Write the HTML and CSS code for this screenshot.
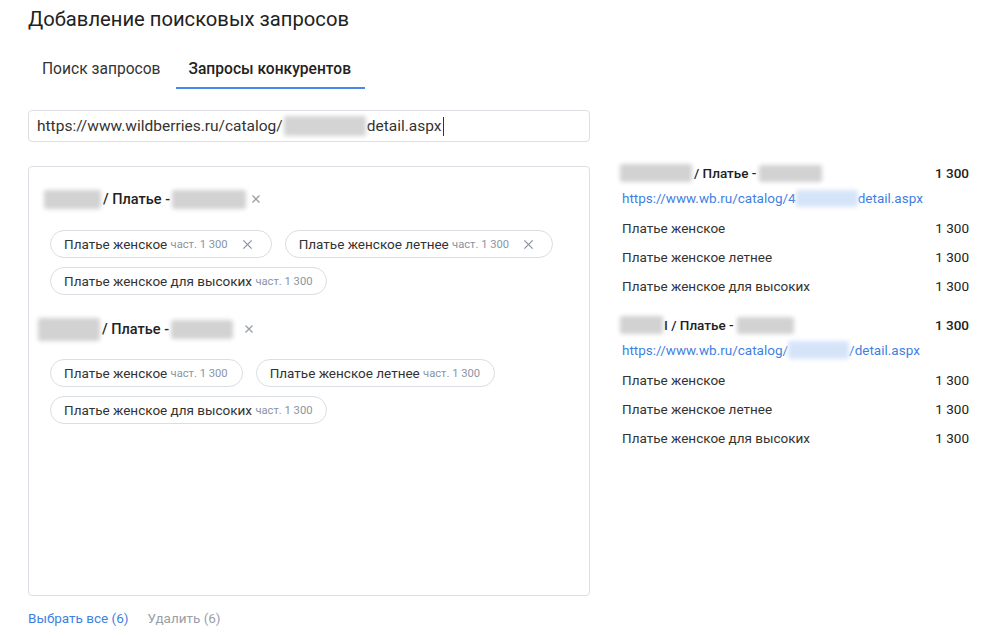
FILE: index.html
```html
<!DOCTYPE html>
<html lang="ru">
<head>
<meta charset="utf-8">
<link rel="stylesheet" href="styles.css">
</head>
<body>
<div class="page">
  <h1 class="title">Добавление поисковых запросов</h1>
  <div class="tabs">
    <div class="tab">Поиск запросов</div>
    <div class="tab active">Запросы конкурентов</div>
  </div>
  <div class="url-input">
    <span>https://www.wildberries.ru/catalog/</span><span class="blur b-input"></span><span>detail.aspx</span><span class="caret"></span>
  </div>
  <div class="main">
    <div class="left">
      <div class="panel">
        <div class="group">
          <div class="group-head">
            <span class="blur b-g1a"></span><span class="gname">/ Платье -</span><span class="blur b-g1b"></span>
            <svg class="x-small" viewBox="0 0 10 10"><path d="M1.5 1.5l7 7M8.5 1.5l-7 7"/></svg>
          </div>
          <div class="chips">
            <div class="chip">Платье женское <span class="freq">част. 1 300</span><svg class="x-chip" viewBox="0 0 12 12"><path d="M1.5 1.5l9 9M10.5 1.5l-9 9"/></svg></div>
            <div class="chip">Платье женское летнее <span class="freq">част. 1 300</span><svg class="x-chip" viewBox="0 0 12 12"><path d="M1.5 1.5l9 9M10.5 1.5l-9 9"/></svg></div>
            <div class="chip">Платье женское для высоких <span class="freq">част. 1 300</span></div>
          </div>
        </div>
        <div class="group">
          <div class="group-head g2">
            <span class="blur b-g2a"></span><span class="gname">/ Платье -</span><span class="blur b-g2b"></span>
            <svg class="x-small" viewBox="0 0 10 10"><path d="M1.5 1.5l7 7M8.5 1.5l-7 7"/></svg>
          </div>
          <div class="chips">
            <div class="chip">Платье женское <span class="freq">част. 1 300</span></div>
            <div class="chip">Платье женское летнее <span class="freq">част. 1 300</span></div>
            <div class="chip">Платье женское для высоких <span class="freq">част. 1 300</span></div>
          </div>
        </div>
      </div>
      <div class="actions">
        <span class="act primary">Выбрать все (6)</span>
        <span class="act muted">Удалить (6)</span>
      </div>
    </div>
    <div class="right">
      <div class="rgroup">
        <div class="rrow rhead"><span class="rname"><span class="blur b-r1a"></span>/ Платье -<span class="blur b-r1b"></span></span><span class="num">1 300</span></div>
        <div class="rlink">https://www.wb.ru/catalog/4<span class="blur blue b-r1c"></span>detail.aspx</div>
        <div class="rrow"><span>Платье женское</span><span class="num">1 300</span></div>
        <div class="rrow"><span>Платье женское летнее</span><span class="num">1 300</span></div>
        <div class="rrow"><span>Платье женское для высоких</span><span class="num">1 300</span></div>
      </div>
      <div class="rgroup">
        <div class="rrow rhead"><span class="rname"><span class="blur b-r2a"></span>I / Платье -<span class="blur b-r2b"></span></span><span class="num">1 300</span></div>
        <div class="rlink">https://www.wb.ru/catalog/<span class="blur blue b-r2c"></span>/detail.aspx</div>
        <div class="rrow"><span>Платье женское</span><span class="num">1 300</span></div>
        <div class="rrow"><span>Платье женское летнее</span><span class="num">1 300</span></div>
        <div class="rrow"><span>Платье женское для высоких</span><span class="num">1 300</span></div>
      </div>
    </div>
  </div>
</div>
</body>
</html>
```

FILE: styles.css
```css
* { box-sizing: border-box; }
html, body { margin: 0; padding: 0; background: #fff; }
body { font-family: Roboto, "Liberation Sans", Arial, sans-serif; color: #2b2b2b; }
.page { padding: 7px 0 0 28px; width: 1000px; height: 638px; overflow: hidden; }
.title { margin: 0; font-size: 20.2px; font-weight: 400; line-height: 24px; color: #222; }
.tabs { display: flex; margin-top: 28px; }
.tab { padding: 0 14px 8px 14px; font-size: 15.6px; line-height: 20px; color: #333; border-bottom: 2px solid transparent; }
.tab + .tab { margin-left: 1px; padding-left: 13px; }
.tab.active { font-weight: 500; color: #222; border-bottom-color: #4a88ea; }
.url-input { margin-top: 21px; width: 562px; height: 32px; border: 1px solid #dcdfe3; border-radius: 4px; padding: 0 8px; display: flex; align-items: center; font-size: 15.5px; color: #333; }
.caret { display: inline-block; width: 1px; height: 19px; background: #333; margin-left: 1px; }
.blur { display: inline-block; background: #d2d2d2; filter: blur(2px); vertical-align: middle; border-radius: 2px; }
.blur.blue { background: #d6e4fa; }
.b-input { width: 82px; height: 20px; background: #d4d4d4; margin: 0 1px; }
.main { display: flex; margin-top: 24px; }
.left { width: 562px; }
.panel { height: 430px; border: 1px solid #dcdfe3; border-radius: 4px; padding: 21px 0 0 0; }
.group-head { display: flex; align-items: center; height: 22px; padding-left: 15px; font-size: 14.5px; font-weight: 500; color: #222; }
.group-head.g2 { padding-left: 9px; }
.gname { margin: 0 2px; }
.b-g1a { width: 57px; height: 19px; }
.b-g1b { width: 74px; height: 19px; }
.b-g2a { width: 62px; height: 23px; }
.b-g2b { width: 62px; height: 19px; }
.x-small { width: 10px; height: 10px; margin-left: 5px; stroke: #9aa0a8; stroke-width: 1.4; fill: none; }
.group-head.g2 .x-small { margin-left: 11px; }
.chips { display: flex; flex-wrap: wrap; gap: 9px 13px; padding: 20px 0 0 21px; width: 540px; }
.group + .group { margin-top: 23px; }
.group + .group .chips { padding-top: 19px; }
.chip { display: flex; align-items: center; height: 28px; border: 1px solid #dadde2; border-radius: 14px; padding: 0 14px 0 13px; font-size: 13.5px; color: #333; white-space: pre; }
.freq { font-size: 11.2px; color: #8a94a3; }
.x-chip { width: 11px; height: 11px; margin-left: 14px; margin-right: 4px; stroke: #8a94a3; stroke-width: 1.4; fill: none; }
.actions { display: flex; gap: 19px; margin-top: 14px; font-size: 13.5px; }
.act.primary { color: #3f7fe3; }
.act.muted { color: #9aa0a8; }
.right { width: 347px; margin-left: 32px; margin-top: -1px; }
.rgroup + .rgroup { margin-top: 17px; }
.rrow { display: flex; justify-content: space-between; align-items: center; height: 29px; font-size: 13.5px; color: #333; }
.rhead { height: 16px; font-weight: 500; color: #222; }
.rname { display: flex; align-items: center; margin-left: -2px; }
.b-r1a { width: 72px; height: 18px; margin-right: 2px; }
.b-r1b { width: 63px; height: 17px; margin-left: 3px; }
.b-r2a { width: 43px; height: 18px; margin-right: 1px; }
.b-r2b { width: 57px; height: 17px; margin-left: 3px; }
.num { color: #222; }
.rhead .num { font-weight: 500; }
.rlink { height: 22px; margin-top: 6px; margin-bottom: 4px; display: flex; align-items: center; font-size: 13.5px; color: #3f7fe3; }
.b-r1c { width: 62px; height: 17px; }
.b-r2c { width: 61px; height: 18px; }
```
